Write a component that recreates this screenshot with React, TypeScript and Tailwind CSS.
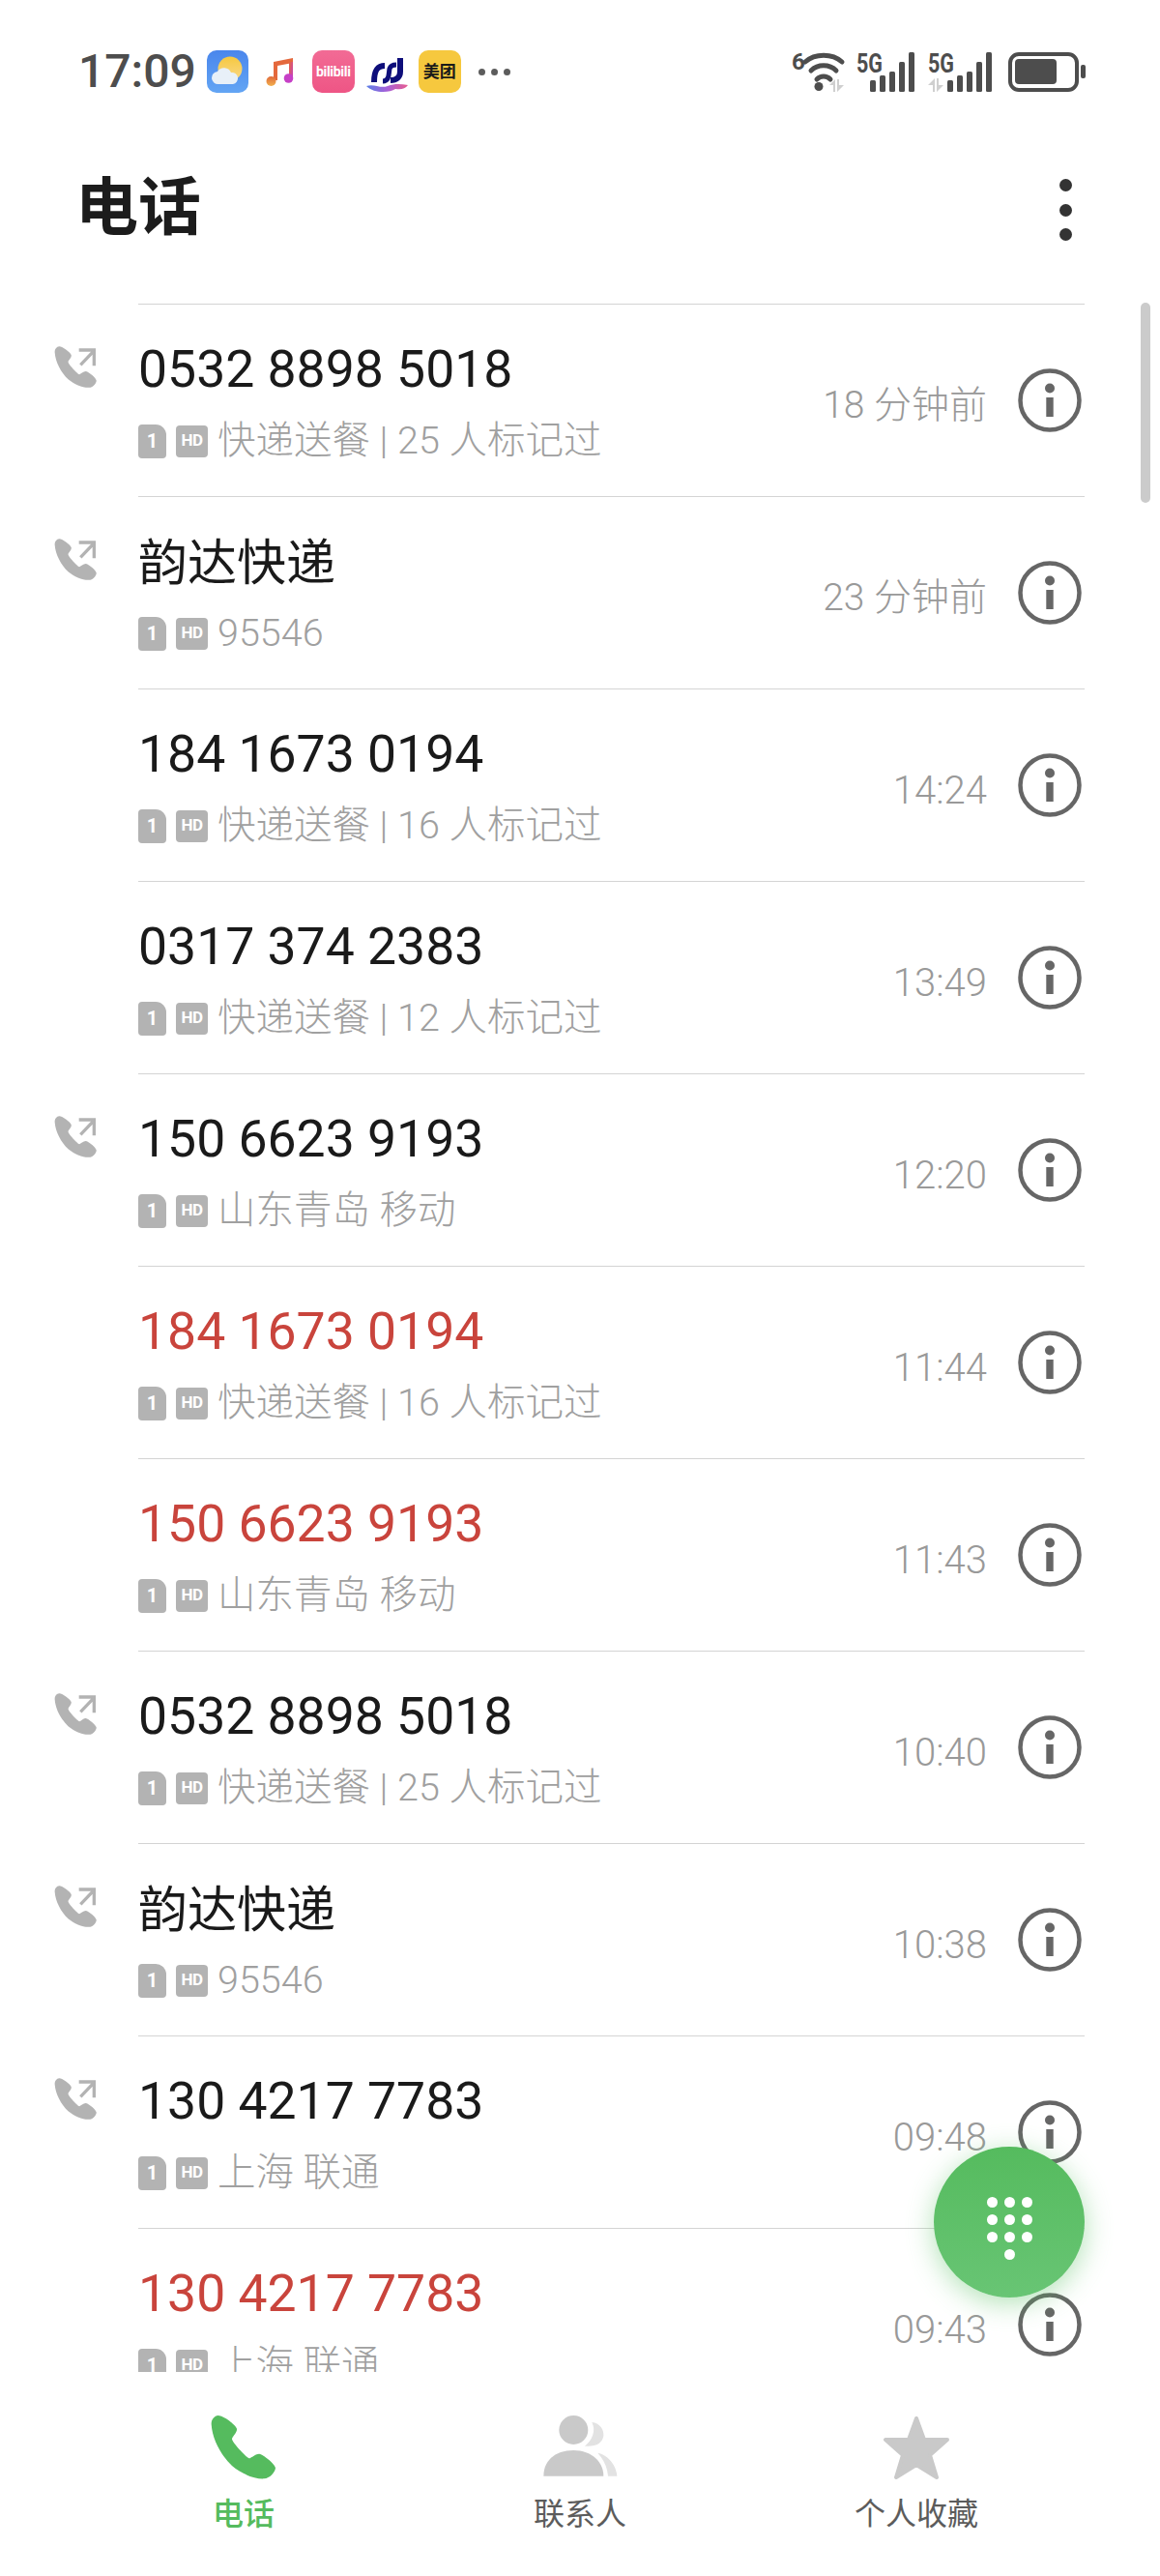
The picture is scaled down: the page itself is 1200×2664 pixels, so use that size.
const handset =
  "M62 27C50 28 40 40 41 55C44 100 70 150 105 183C135 208 175 225 205 223C222 222 238 205 240 190C238 178 205 150 190 146C178 145 165 160 158 160C150 158 105 110 105 100C106 92 122 80 120 68C115 55 80 28 62 27Z";

type Call = { name: string; sub: string; time: string; out?: boolean; missed?: boolean; cjk?: boolean };

const calls: Call[] = [
  { name: "0532 8898 5018", sub: "快递送餐 | 25 人标记过", time: "18 分钟前", out: true },
  { name: "韵达快递", sub: "95546", time: "23 分钟前", out: true, cjk: true },
  { name: "184 1673 0194", sub: "快递送餐 | 16 人标记过", time: "14:24" },
  { name: "0317 374 2383", sub: "快递送餐 | 12 人标记过", time: "13:49" },
  { name: "150 6623 9193", sub: "山东青岛 移动", time: "12:20", out: true },
  { name: "184 1673 0194", sub: "快递送餐 | 16 人标记过", time: "11:44", missed: true },
  { name: "150 6623 9193", sub: "山东青岛 移动", time: "11:43", missed: true },
  { name: "0532 8898 5018", sub: "快递送餐 | 25 人标记过", time: "10:40", out: true },
  { name: "韵达快递", sub: "95546", time: "10:38", out: true, cjk: true },
  { name: "130 4217 7783", sub: "上海 联通", time: "09:48", out: true },
  { name: "130 4217 7783", sub: "上海 联通", time: "09:43", missed: true },
];

function OutgoingIcon() {
  return (
    <svg width="60" height="60" viewBox="0 0 180 180">
      <g transform="translate(-6.65 7.45) scale(0.65)" fill="#b3b3b3">
        <path d={handset} />
      </g>
      <path d="M100 82L140 40M95 36H142V85" fill="none" stroke="#b3b3b3" strokeWidth="10" />
    </svg>
  );
}

function InfoIcon() {
  return (
    <svg width="66" height="66" viewBox="0 0 66 66">
      <circle cx="33" cy="33" r="30.5" fill="none" stroke="#666" strokeWidth="4.5" />
      <circle cx="33" cy="20.5" r="5" fill="#666" />
      <rect x="29.3" y="30" width="7.4" height="20" fill="#666" />
    </svg>
  );
}

function SimBadges() {
  return (
    <div className="flex items-center gap-[10px]">
      <div className="flex h-[35px] w-[29px] items-center justify-center rounded-[4px] rounded-tr-[11px] bg-[#b3b3b3] text-[20px] font-bold text-white">
        1
      </div>
      <div className="flex h-[33px] w-[33px] items-center justify-center rounded-[4px] bg-[#b3b3b3] text-[17px] font-bold tracking-[-0.5px] text-white">
        HD
      </div>
    </div>
  );
}

function CallRow({ call }: { call: Call }) {
  return (
    <div className="flex h-[199px]">
      <div className="w-[143px] shrink-0 pl-[50px] pt-[36px]">{call.out && <OutgoingIcon />}</div>
      <div className="mr-[78px] flex flex-1 justify-between border-t border-[#d4d4d4]">
        <div>
          <div
            className={`mt-[40px] leading-[54px] ${call.cjk ? "translate-y-[2px] text-[51px]" : "text-[53.5px]"} ${
              call.missed ? "text-[#c9443c]" : "text-[#1a1a1a]"
            }`}
          >
            {call.name}
          </div>
          <div className="mt-[22px] flex h-[50px] items-center gap-[10px]">
            <SimBadges />
            <span className="text-[39.5px] font-light leading-[50px] text-[#a0a0a0]">{call.sub}</span>
          </div>
        </div>
        <div className="flex items-center gap-[32px] pr-[3px]">
          <span className={`pt-[11px] font-light text-[#999999] ${call.time.length > 5 ? "text-[39px]" : "text-[40px]"}`}>
            {call.time}
          </span>
          <InfoIcon />
        </div>
      </div>
    </div>
  );
}

function AppIcons() {
  return (
    <div className="flex h-[44px] items-center">
      <svg width="43" height="44" viewBox="0 0 43 44" className="ml-[11px]">
        <defs>
          <linearGradient id="sky" x1="0" y1="0" x2="0" y2="1">
            <stop offset="0" stopColor="#4a86ec" />
            <stop offset="1" stopColor="#63a5f4" />
          </linearGradient>
          <linearGradient id="sun" x1="0" y1="0" x2="0" y2="1">
            <stop offset="0" stopColor="#f6c83f" />
            <stop offset="1" stopColor="#f9d98a" />
          </linearGradient>
        </defs>
        <rect width="43" height="44" rx="10" fill="url(#sky)" />
        <circle cx="24" cy="19" r="12.5" fill="url(#sun)" />
        <path d="M12 35a6.5 6.5 0 0 1-1-13a8 8 0 0 1 14 1a6 6 0 0 1 2 12z" fill="#e8f0f8" />
      </svg>
      <svg width="30" height="30" viewBox="0 0 30 30" className="ml-[18px]">
        <defs>
          <linearGradient id="note" x1="0" y1="0" x2="1" y2="1">
            <stop offset="0" stopColor="#e8663c" />
            <stop offset="1" stopColor="#c23fc4" />
          </linearGradient>
          <linearGradient id="noteB" x1="0" y1="0" x2="0" y2="1">
            <stop offset="0" stopColor="#e06a3a" />
            <stop offset="1" stopColor="#f2b04e" />
          </linearGradient>
        </defs>
        <path d="M8 5L28 1V6L12 9V24H8Z" fill="#e4683c" />
        <path d="M24 5h4v18h-4z" fill="url(#note)" />
        <circle cx="5.5" cy="25" r="5" fill="url(#noteB)" />
        <circle cx="23.5" cy="22" r="4.8" fill="#c640c6" />
      </svg>
      <div className="ml-[18px] flex h-[44px] w-[44px] items-center justify-center rounded-[10px] bg-gradient-to-b from-[#f26b95] to-[#ee5585] text-[14px] font-bold leading-none tracking-[-0.3px] text-white">
        bilibili
      </div>
      <svg width="43" height="36" viewBox="0 0 43 36" className="ml-[12px] self-end">
        <defs>
          <linearGradient id="wave" x1="0" y1="0" x2="1" y2="0">
            <stop offset="0" stopColor="#5b7fe6" />
            <stop offset="0.5" stopColor="#a65fd8" />
            <stop offset="1" stopColor="#e85c8f" />
          </linearGradient>
        </defs>
        <g fill="none" stroke="#0e0e7a">
          <path d="M19 8C11 8 8 13 8 25" strokeWidth="6" />
          <path d="M17 24C24 24 23 16 24 11C25 8 28 7 31 7" strokeWidth="5" />
          <path d="M35 0V14C35 20 31 23 25 23" strokeWidth="6" />
        </g>
        <path d="M0 29C8 26 14 32 22 29C30 26 36 27 43 28C40 32 36 33 30 32C24 36 8 37 0 29Z" fill="url(#wave)" />
      </svg>
      <div className="ml-[11px] flex h-[44px] w-[44px] items-center justify-center rounded-[10px] bg-[#f6c83e] text-[17px] font-bold leading-none text-[#1a1a1a]">
        美团
      </div>
      <div className="ml-[18px] flex gap-[6px]">
        <div className="h-[7px] w-[7px] rounded-full bg-[#5c5c5c]" />
        <div className="h-[7px] w-[7px] rounded-full bg-[#5c5c5c]" />
        <div className="h-[7px] w-[7px] rounded-full bg-[#5c5c5c]" />
      </div>
    </div>
  );
}

function SignalIcon({ second }: { second?: boolean }) {
  return (
    <svg width="70" height="41" viewBox="0 0 70 41" className="overflow-visible">
      <text x="0" y="21" textLength="27" lengthAdjust="spacingAndGlyphs" fontSize="28" fontWeight="700" fill="#4d4d4d">
        5G
      </text>
      {second && <path d="M0 34L7 27V41H5V34ZM9 27V41L16 34H11V27Z" fill="#cfcfcf" />}
      <g fill="#4d4d4d" transform={second ? "translate(20 0)" : "translate(14 0)"}>
        <rect x="0" y="29" width="6" height="12" rx="1.5" />
        <rect x="10" y="24" width="6" height="17" rx="1.5" />
        <rect x="20" y="20" width="6" height="21" rx="1.5" />
        <rect x="30" y="10" width="6" height="31" rx="1.5" />
        <rect x="40" y="0" width="6" height="41" rx="1.5" />
      </g>
    </svg>
  );
}

function StatusRight() {
  return (
    <div className="mt-[1px] flex items-center">
      <svg width="60" height="42" viewBox="0 0 60 42" className="overflow-visible">
        <text x="0" y="19" fontSize="24" fontWeight="700" fill="#4d4d4d">
          6
        </text>
        <path d="M14 11C24 2 42 2 52 11" fill="none" stroke="#4d4d4d" strokeWidth="5" strokeLinecap="round" />
        <path d="M20 20C27 13 39 13 46 20" fill="none" stroke="#4d4d4d" strokeWidth="5" strokeLinecap="round" />
        <path d="M26 29C30 25 36 25 40 29" fill="none" stroke="#4d4d4d" strokeWidth="5" strokeLinecap="round" />
        <circle cx="28" cy="36.5" r="4.5" fill="#4d4d4d" />
        <path d="M39 35L45 29V42H43V35ZM47 29V42L54 35H49V29Z" fill="#cfcfcf" />
      </svg>
      <div className="ml-[7px]">
        <SignalIcon />
      </div>
      <div className="ml-[4px] mr-[-4px]">
        <SignalIcon second />
      </div>
      <div className="ml-[17px] flex items-center gap-[2px]">
        <div className="flex h-[41px] w-[73px] items-center rounded-[11px] border-[4px] border-[#4d4d4d] p-[3px]">
          <div className="h-[26px] w-[43px] rounded-[4px] bg-[#4d4d4d]" />
        </div>
        <div className="h-[14px] w-[5px] rounded-[2px] bg-[#4d4d4d]" />
      </div>
    </div>
  );
}

function ContactsIcon() {
  return (
    <svg width="90" height="85" viewBox="0 0 270 255">
      <circle cx="115" cy="72" r="45" fill="#c9c9c9" />
      <path d="M22 215C22 165 60 135 115 135C170 135 208 170 208 215Z" fill="#c9c9c9" />
      <path d="M172 48C195 50 210 70 208 90C205 112 185 125 150 122C172 105 186 75 172 48Z" fill="#e2e2e2" />
      <path d="M190 143C225 150 248 185 250 215H222C220 190 210 165 190 143Z" fill="#e2e2e2" />
    </svg>
  );
}

function StarIcon() {
  return (
    <svg width="72" height="68" viewBox="0 0 72 68">
      <path
        d="M36 3L44 25L68 25L50 41L57 64L36 51L15 64L22 41L4 25L28 25Z"
        fill="#c9c9c9"
        stroke="#c9c9c9"
        strokeWidth="4"
        strokeLinejoin="round"
      />
    </svg>
  );
}

const dialDots = Array.from({ length: 9 });

export default function App() {
  return (
    <div
      className="relative flex h-[2664px] w-[1200px] flex-col overflow-hidden bg-white"
      style={{ fontFamily: 'Roboto, "Noto Sans CJK SC", sans-serif' }}
    >
      <div className="flex h-[146px] items-start justify-between pl-[81px] pr-[77px] pt-[52px]">
        <div className="flex h-[44px] items-center">
          <span className="text-[48px] font-medium leading-none text-[#4d4d4d]">17:09</span>
          <AppIcons />
        </div>
        <StatusRight />
      </div>

      <div className="flex h-[168px] items-start justify-between pl-[78px] pr-[91px] pt-[34px]">
        <h1 className="text-[65px] font-bold leading-[70px] text-[#1c1c1c]">电话</h1>
        <div className="flex flex-col gap-[12.5px] pt-[5px]">
          <div className="h-[13px] w-[13px] rounded-full bg-[#333333]" />
          <div className="h-[13px] w-[13px] rounded-full bg-[#333333]" />
          <div className="h-[13px] w-[13px] rounded-full bg-[#333333]" />
        </div>
      </div>

      <div className="h-[2139px] overflow-hidden">
        {calls.map((call, i) => (
          <CallRow key={i} call={call} />
        ))}
      </div>

      <div className="grid flex-1 grid-cols-3 px-[78px] pt-[45px]">
        <div className="flex flex-col items-center">
          <svg width="90" height="85" viewBox="0 0 270 255" className="-my-[9px] -translate-x-[2px]">
            <path d={handset} fill="#55bb5e" />
          </svg>
          <span className="mt-[19px] text-[32px] font-medium leading-[32px] text-[#55bb5e]">电话</span>
        </div>
        <div className="flex flex-col items-center">
          <div className="-my-[9px]">
            <ContactsIcon />
          </div>
          <span className="mt-[19px] text-[32px] leading-[32px] text-[#5c5c5c]">联系人</span>
        </div>
        <div className="flex flex-col items-center">
          <StarIcon />
          <span className="mt-[18px] text-[32px] leading-[32px] text-[#5c5c5c]">个人收藏</span>
        </div>
      </div>

      <div className="absolute left-[1180px] top-[313px] h-[207px] w-[10px] rounded-full bg-[#cbcbcb]" />

      <div className="absolute left-[966px] top-[2220px] flex h-[156px] w-[156px] flex-col items-center justify-center rounded-full bg-gradient-to-b from-[#55bb5e] to-[#68c574] pt-[12px] shadow-[0_6px_28px_rgba(85,190,95,0.45)]">
        <div className="grid grid-cols-3 gap-[7px]">
          {dialDots.map((_, i) => (
            <div key={i} className="h-[11px] w-[11px] rounded-full bg-white" />
          ))}
        </div>
        <div className="mt-[7px] h-[11px] w-[11px] rounded-full bg-white" />
      </div>
    </div>
  );
}
